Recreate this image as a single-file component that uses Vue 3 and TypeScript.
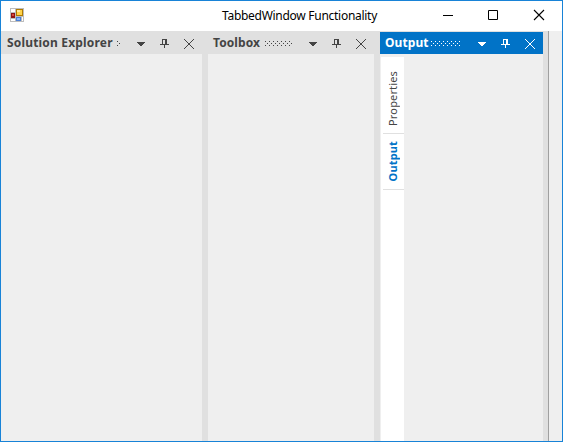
<script setup lang="ts">
interface Panel {
  id: string
  title: string
  grip: number
  active?: boolean
  tabs?: string[]
}

const panels: Panel[] = [
  { id: 'solution', title: 'Solution Explorer', grip: 3 },
  { id: 'toolbox', title: 'Toolbox', grip: 27 },
  { id: 'output', title: 'Output', grip: 30, active: true, tabs: ['Properties', 'Output'] },
]

// Staggered grip dots: outer rows every 4px, middle row offset by 2px.
function gripPath(width: number): string {
  let d = ''
  for (let x = 0; x < width; x += 4) {
    d += `M${x} 0h1v1h-1zM${x} 4h1v1h-1z`
    if (x + 2 < width) d += `M${x + 2} 2h1v1h-1z`
  }
  return d
}
</script>

<template>
  <div class="window">
    <header class="titlebar">
      <svg class="app-icon" width="15" height="15" viewBox="0 0 15 15" shape-rendering="crispEdges">
        <path fill="#bdbdbd" d="M0 0h14v14H0z" />
        <path fill="#fff" d="M1 1h4v3H1zM1 11h4v2H1zM12 9h1v4h-1z" />
        <path fill="#8f1414" d="M1 5h4v5H1z" />
        <path fill="#d8473c" d="M2 6h2v2H2z" />
        <path fill="#b17b00" d="M6 1h7v7H6z" />
        <path fill="#ffd34a" d="M7 2h5v5H7z" />
        <path fill="#ffea9b" d="M7 2h3v2H7z" />
        <path fill="#4a7fd6" d="M6 9h5v4H6z" />
        <path fill="#8db8f8" d="M7 10h3v2H7z" />
      </svg>
      <span class="caption">TabbedWindow Functionality</span>
      <div class="controls">
        <svg width="46" height="29" viewBox="0 0 46 29" fill="none" stroke="#000">
          <path d="M19 14.5h10" />
        </svg>
        <svg width="46" height="29" viewBox="0 0 46 29" fill="none" stroke="#000">
          <path d="M18.5 9.5h9v9h-9z" />
        </svg>
        <svg width="46" height="29" viewBox="0 0 46 29" fill="none" stroke="#000" stroke-width="1.1">
          <path d="M18 9l10 10M28 9l-10 10" />
        </svg>
      </div>
    </header>

    <main class="dock">
      <section v-for="p in panels" :key="p.id" class="panel" :class="[p.id, { active: p.active }]">
        <div class="head">
          <span class="name">{{ p.title }}</span>
          <svg class="grip" :width="p.grip" height="5" shape-rendering="crispEdges">
            <path :d="gripPath(p.grip)" fill="currentColor" />
          </svg>
          <svg class="tools" width="57" height="11" viewBox="0 0 57 11" fill="currentColor" shape-rendering="crispEdges">
            <path d="M0 3h8v1H0zM1 4h6v1H1zM2 5h4v1H2zM3 6h2v1H3z" />
            <path d="M25 0h5v5h2v1h-4v3h-1V6h-4V5h2zM26 1v4h2V1z" fill-rule="evenodd" />
            <path
              d="M47 0l10 10M57 0l-10 10"
              fill="none"
              stroke="currentColor"
              shape-rendering="auto"
            />
          </svg>
        </div>
        <div class="body">
          <nav v-if="p.tabs" class="tabs">
            <div v-for="t in p.tabs" :key="t" class="tab" :class="{ selected: t === p.title }">
              <span>{{ t }}</span>
            </div>
          </nav>
        </div>
      </section>
      <div class="rest"></div>
    </main>
  </div>
</template>

<style>
body {
  margin: 0;
  overflow: hidden;
}
</style>

<style scoped>
.window {
  box-sizing: border-box;
  width: 563px;
  height: 442px;
  border: 1px solid #1883d7;
  background: #efefef;
  display: flex;
  flex-direction: column;
  font-family: 'Noto Sans', 'Open Sans', sans-serif;
}
.titlebar {
  height: 30px;
  background: #fff;
  display: flex;
  flex: none;
}
.app-icon {
  margin: 7px 0 0 9px;
  flex: none;
}
.caption {
  margin-left: 197px;
  width: 158px;
  font-size: 12px;
  line-height: 30px;
  letter-spacing: -0.28px;
  white-space: nowrap;
  color: #000;
}
.controls {
  display: flex;
  margin-left: auto;
}
.dock {
  flex: 1;
  display: flex;
  background: #e0e0e0;
  min-height: 0;
}
.panel {
  display: flex;
  flex-direction: column;
  color: #444;
  margin-right: 6px;
}
.solution {
  width: 201px;
}
.toolbox {
  width: 166px;
}
.output {
  width: 163px;
  margin-right: 5px;
}
.head {
  height: 22px;
  margin-top: 1px;
  padding: 0 8px 0 5px;
  display: flex;
  align-items: center;
  flex: none;
}
.solution .head {
  padding-left: 6px;
}
.active .head {
  background: #0173c7;
  color: #fff;
}
.name {
  font-size: 12px;
  font-weight: 700;
  line-height: 22px;
  letter-spacing: 0.08px;
  white-space: nowrap;
}
.solution .name {
  letter-spacing: 0.18px;
}
.grip {
  margin: 1px 17px 0 auto;
  flex: none;
}
.tools {
  flex: none;
  margin-top: 3px;
}
.body {
  flex: 1;
  background: #efefef;
  display: flex;
}
.tabs {
  width: 23px;
  margin: 3px 0 0 1px;
  background: #fff;
}
.tab {
  box-sizing: border-box;
  height: 77px;
  margin-left: 2px;
  padding-top: 6px;
  border-bottom: 1px solid #e0e0e0;
  display: flex;
  align-items: center;
  justify-content: center;
}
.tab.selected {
  height: 56px;
  padding-top: 0;
  color: #0173c7;
  font-weight: 700;
}
.tab span {
  writing-mode: vertical-rl;
  transform: rotate(180deg);
  font-size: 11px;
  line-height: 20px;
  letter-spacing: 0.15px;
  margin-right: 2px;
}
</style>

<style scoped>
.rest {
  flex: 1;
  background: #efefef;
  border-left: 1px solid #a0a0a0;
}
</style>
